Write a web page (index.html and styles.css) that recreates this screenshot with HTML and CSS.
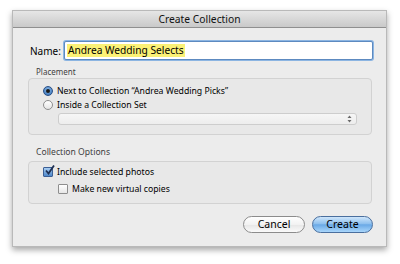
FILE: index.html
```html
<!DOCTYPE html>
<html lang="en">
<head>
    <meta charset="UTF-8">
    <title>Create Collection</title>
    <link rel="stylesheet" href="styles.css">
</head>
<body>
    <div class="dialog">
        <div class="titlebar">Create Collection</div>
        <div class="content">
            <div class="name-row">
                <label class="name-label">Name:</label>
                <div class="name-input"><span class="selected">Andrea Wedding Selects</span></div>
            </div>

            <div class="group-label">Placement</div>
            <div class="group placement">
                <div class="option">
                    <span class="radio on"></span>
                    <span>Next to Collection “Andrea Wedding Picks”</span>
                </div>
                <div class="option">
                    <span class="radio"></span>
                    <span>Inside a Collection Set</span>
                </div>
                <div class="popup">
                    <svg class="arrows" width="5" height="8" viewBox="0 0 5 8">
                        <path d="M0.5 3 L2.5 0.5 L4.5 3 Z" fill="#6a6a6a"/>
                        <path d="M0.5 5 L2.5 7.5 L4.5 5 Z" fill="#6a6a6a"/>
                    </svg>
                </div>
            </div>

            <div class="group-label options-label">Collection Options</div>
            <div class="group options">
                <div class="option">
                    <span class="check on">
                        <svg width="11" height="11" viewBox="0 0 11 11">
                            <path d="M2 5.5 L4.5 8.5 L10 0.5" fill="none" stroke="#1d2f52" stroke-width="1.8"/>
                        </svg>
                    </span>
                    <span>Include selected photos</span>
                </div>
                <div class="option sub">
                    <span class="check"></span>
                    <span>Make new virtual copies</span>
                </div>
            </div>

            <div class="buttons">
                <button class="btn cancel">Cancel</button>
                <button class="btn create">Create</button>
            </div>
        </div>
    </div>
</body>
</html>
```

FILE: styles.css
```css
*{
    margin: 0;
    padding: 0;
    box-sizing: border-box;
    font-family: 'Noto Sans', 'DejaVu Sans', sans-serif;
}

body{
    background: #fff;
    width: 400px;
    height: 264px;
    overflow: hidden;
}

.dialog{
    width: 375px;
    height: 237px;
    margin: 10px 0 0 12px;
    background: #ececec;
    border: 1px solid #b9b9b9;
    box-shadow: 0 3px 6px rgba(0,0,0,0.35);
}

.titlebar{
    height: 17px;
    background: linear-gradient(#e6e6e6, #c9c9c9);
    border-bottom: 1px solid #8f8f8f;
    text-align: center;
    font-size: 10.3px;
    line-height: 16px;
    color: #111;
}

.content{
    padding: 13px 14px 0 15px;
}

.name-row{
    display: flex;
    align-items: center;
    padding-left: 2px;
}
.name-label{
    font-size: 10px;
    color: #000;
    margin-right: 3px;
}
.name-input{
    flex: 1;
    height: 19px;
    margin-right: -1px;
    background: #fff;
    border: 1px solid #5d8ac0;
    border-radius: 2px;
    box-shadow: 0 0 0 1px #8cb5e2;
    padding: 1px 2px;
    display: flex;
    align-items: center;
}
.selected{
    background: #fbf176;
    font-size: 10.2px;
    line-height: 13px;
    padding: 0 1px;
    color: #000;
}

.group-label{
    font-size: 8px;
    color: #3f3f3f;
    margin: 6px 0 1px 8px;
    line-height: 11px;
}
.options-label{
    margin-top: 12px;
    margin-bottom: 3px;
    font-size: 8.6px;
}

.group{
    border: 1px solid #d2d2d2;
    border-radius: 4px;
    background: #e8e8e8;
    padding: 5px 0 0 14px;
}
.placement{
    height: 57px;
}
.options{
    height: 43px;
    padding-top: 3px;
}

.option{
    display: flex;
    align-items: center;
    font-size: 8.7px;
    color: #000;
    height: 14px;
}
.option.sub{
    margin-left: 15px;
    margin-top: 3px;
}

.radio{
    width: 10px;
    height: 10px;
    border-radius: 50%;
    border: 1px solid #8e8e8e;
    background: linear-gradient(#fff, #e4e4e4);
    margin-right: 4px;
    position: relative;
}
.radio.on{
    border-color: #2a4f86;
    background: radial-gradient(circle at 50% 35%, #8dbbe9, #2f6bb3);
}
.radio.on::after{
    content: "";
    position: absolute;
    width: 4px;
    height: 4px;
    border-radius: 50%;
    background: #1a1a1a;
    left: 2px;
    top: 2px;
}

.check{
    width: 10px;
    height: 10px;
    border: 1px solid #8e8e8e;
    border-radius: 1px;
    background: linear-gradient(#fff, #e6e6e6);
    margin-right: 4px;
    position: relative;
}
.check.on{
    border-color: #3b5f95;
    background: linear-gradient(#a8cdf2, #4d86c9);
}
.check.on svg{
    position: absolute;
    left: 0;
    top: -3px;
}

.popup{
    margin: 1px 0 0 15px;
    width: 299px;
    height: 12px;
    border: 1px solid #cdcdcd;
    border-radius: 3px;
    background: linear-gradient(#f6f6f6, #ededed);
    display: flex;
    justify-content: flex-end;
    align-items: center;
    padding-right: 4px;
}

.buttons{
    display: flex;
    justify-content: flex-end;
    gap: 7px;
    margin-top: 12px;
    margin-right: -1px;
}
.btn{
    height: 17px;
    width: 62px;
    border-radius: 9px;
    font-size: 10.5px;
    line-height: 15px;
    color: #000;
}
.cancel{
    border: 1px solid #8c8c8c;
    background: linear-gradient(#fff, #f2f2f2 50%, #e6e6e6 51%, #fafafa);
}
.create{
    width: 61px;
    border: 1px solid #4a6f9e;
    background: linear-gradient(#cfe6fb, #8ec0ee 45%, #6aa9e6 52%, #a9d6fb);
}
```
